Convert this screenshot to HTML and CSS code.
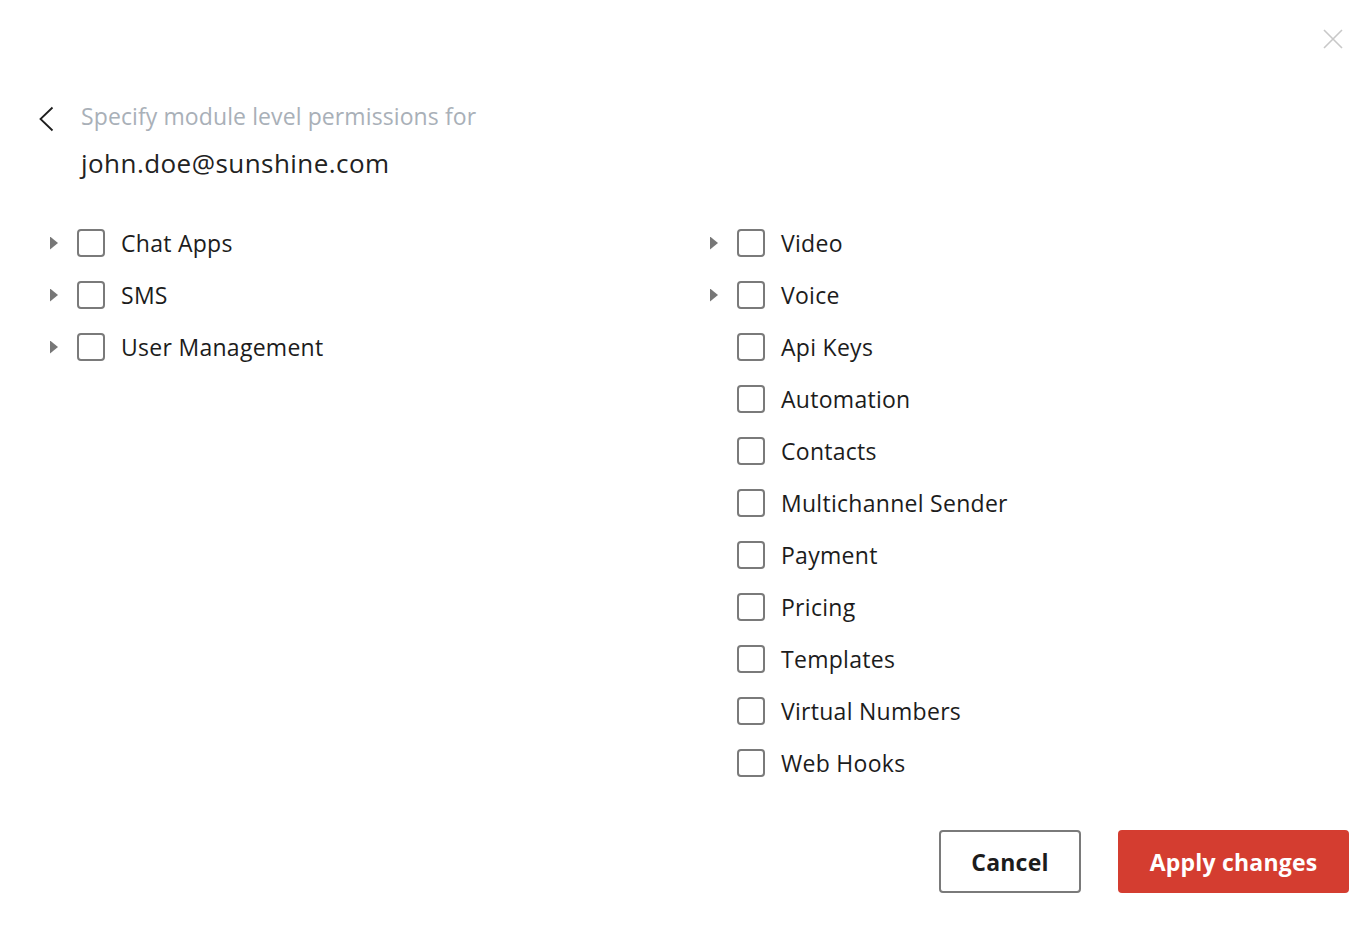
FILE: index.html
```html
<!DOCTYPE html>
<html lang="en">
<head>
<meta charset="utf-8">
<title>Module permissions</title>
<link rel="stylesheet" href="styles.css">
</head>
<body>
<div class="dialog">
  <div class="topbar">
    <button class="close" aria-label="Close">
      <svg width="20" height="20" viewBox="0 0 20 20"><path d="M1 1L19 19M19 1L1 19" stroke="#c8c8c8" stroke-width="1.6" fill="none"/></svg>
    </button>
  </div>
  <div class="header">
    <button class="back" aria-label="Back">
      <svg width="16" height="26" viewBox="0 0 16 26"><path d="M14.5 1.5L2.5 13L14.5 24.5" stroke="#1e1e1e" stroke-width="1.8" fill="none" stroke-linejoin="miter"/></svg>
    </button>
    <div class="titles">
      <div class="subtitle">Specify module level permissions for</div>
      <div class="email">john.doe@sunshine.com</div>
    </div>
  </div>
  <div class="columns">
    <div class="col">
      <div class="row"><span class="caret"></span><span class="box"></span><span class="label">Chat Apps</span></div>
      <div class="row"><span class="caret"></span><span class="box"></span><span class="label">SMS</span></div>
      <div class="row"><span class="caret"></span><span class="box"></span><span class="label">User Management</span></div>
    </div>
    <div class="col">
      <div class="row"><span class="caret"></span><span class="box"></span><span class="label">Video</span></div>
      <div class="row"><span class="caret"></span><span class="box"></span><span class="label">Voice</span></div>
      <div class="row"><span class="nocaret"></span><span class="box"></span><span class="label">Api Keys</span></div>
      <div class="row"><span class="nocaret"></span><span class="box"></span><span class="label">Automation</span></div>
      <div class="row"><span class="nocaret"></span><span class="box"></span><span class="label">Contacts</span></div>
      <div class="row"><span class="nocaret"></span><span class="box"></span><span class="label">Multichannel Sender</span></div>
      <div class="row"><span class="nocaret"></span><span class="box"></span><span class="label">Payment</span></div>
      <div class="row"><span class="nocaret"></span><span class="box"></span><span class="label">Pricing</span></div>
      <div class="row"><span class="nocaret"></span><span class="box"></span><span class="label">Templates</span></div>
      <div class="row"><span class="nocaret"></span><span class="box"></span><span class="label">Virtual Numbers</span></div>
      <div class="row"><span class="nocaret"></span><span class="box"></span><span class="label">Web Hooks</span></div>
    </div>
  </div>
  <div class="actions">
    <button class="btn cancel">Cancel</button>
    <button class="btn apply">Apply changes</button>
  </div>
</div>
</body>
</html>
```

FILE: styles.css
```css
* { box-sizing: border-box; }
html, body { margin: 0; padding: 0; background: #fff; }
body {
  font-family: "Open Sans", "Noto Sans", sans-serif;
  color: #1c1c1c;
  width: 1368px;
  height: 938px;
  overflow: hidden;
}
button { font-family: inherit; cursor: pointer; }
.dialog {
  padding: 0 19px 0 38px;
}
.topbar {
  height: 100px;
  display: flex;
  justify-content: flex-end;
  padding-top: 29px;
  padding-right: 6px;
}
.close {
  border: 0;
  background: none;
  padding: 0;
  width: 20px;
  height: 20px;
  display: block;
}
.close svg { display: block; }
.header {
  display: flex;
  align-items: flex-start;
  gap: 27px;
}
.back {
  border: 0;
  background: none;
  padding: 0;
  margin-top: 6px;
  width: 16px;
  height: 26px;
}
.back svg { display: block; }
.subtitle {
  font-size: 23px;
  line-height: 32px;
  font-weight: 500;
  letter-spacing: 0.1px;
  color: #a9b0b8;
}
.email {
  margin-top: 13px;
  font-size: 26px;
  line-height: 36px;
  letter-spacing: 0.45px;
  color: #222;
}
.columns {
  margin-top: 36px;
  margin-left: 11px;
  display: grid;
  grid-template-columns: 660px 1fr;
}
.col { display: flex; flex-direction: column; }
.row {
  height: 52px;
  display: flex;
  align-items: center;
}
.caret, .nocaret {
  width: 28px;
  height: 13px;
  flex: none;
}
.caret {
  background: #777;
  clip-path: polygon(1px 0, 9px 50%, 1px 100%);
}
.box {
  width: 28px;
  height: 28px;
  border: 2px solid #7a7a7a;
  border-radius: 4px;
  flex: none;
}
.label {
  margin-left: 16px;
  font-size: 23px;
  line-height: 30px;
  letter-spacing: 0.28px;
  color: #1c1c1c;
}
.actions {
  margin-top: 41px;
  display: flex;
  justify-content: flex-end;
  gap: 37px;
}
.btn {
  height: 63px;
  border-radius: 4px;
  font-size: 23px;
  font-weight: 700;
  letter-spacing: 0.2px;
}
.cancel {
  width: 142px;
  background: #fff;
  border: 2px solid #7a7a7a;
  color: #1c1c1c;
}
.apply {
  width: 231px;
  background: #d43d30;
  border: 0;
  color: #fff;
}
```
